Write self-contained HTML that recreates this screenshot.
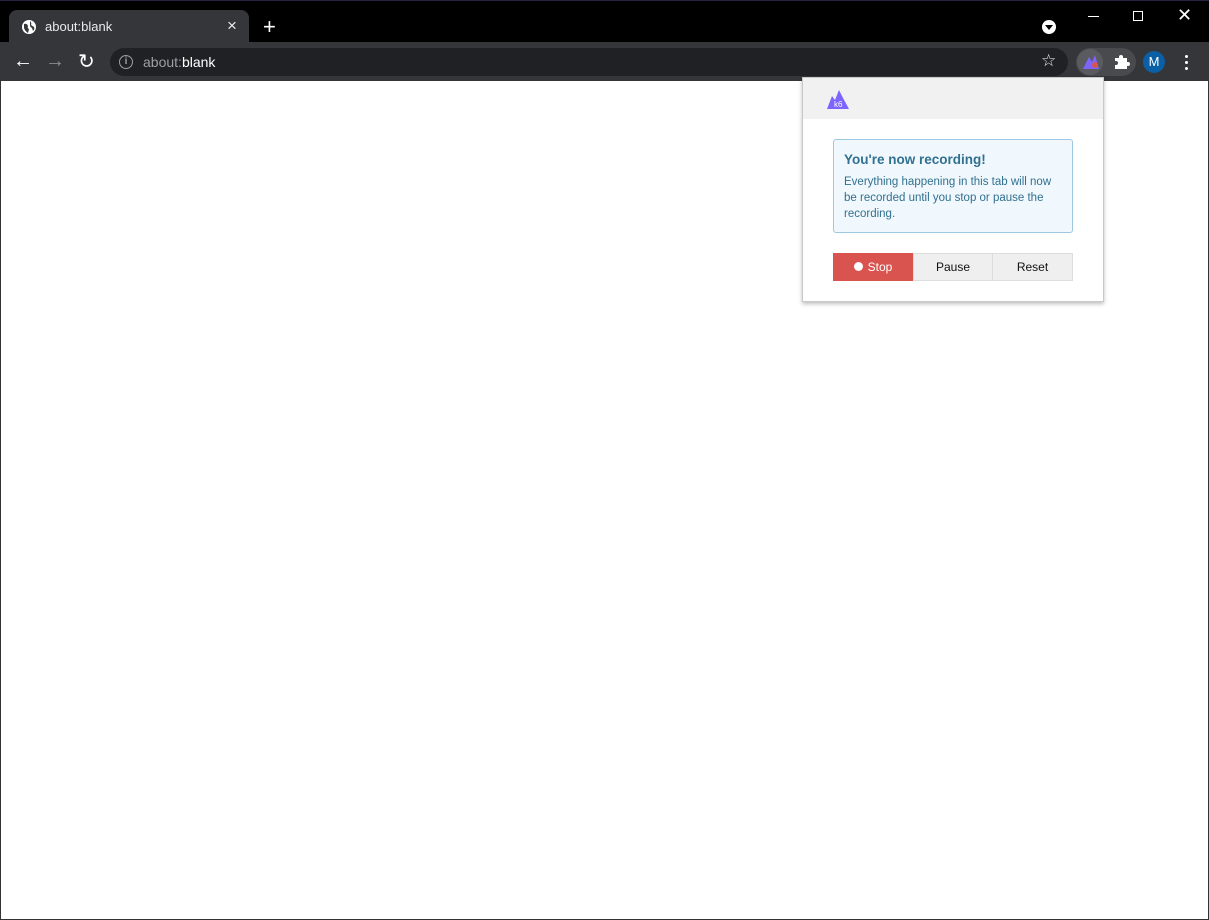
<!DOCTYPE html>
<html><head><style>
*{margin:0;padding:0;box-sizing:border-box}
body{width:1209px;height:920px;overflow:hidden;background:#fff;font-family:"Liberation Sans",sans-serif;position:relative}
.abs{position:absolute}
</style></head><body>
<div class="abs" style="left:0;top:0;width:1209px;height:42px;background:#000;border-top:1px solid #2a2340"></div>
<div class="abs" style="left:9px;top:10px;width:240px;height:34px;background:#35363a;border-radius:8px 8px 0 0"></div>
<svg class="abs" style="left:21px;top:19px" width="16" height="16" viewBox="0 0 16 16"><circle cx="8" cy="8" r="7" fill="#fff"/><path d="M3 5 Q6 4 7 7 Q6 9 8 10 L7 14 Q4 12 3 9Z M9 2 Q11 4 10 6 L13 8 Q14 10 12 12 L11 9 Q9 8 9 6Z" fill="#35363a"/></svg>
<div class="abs" style="left:45px;top:19px;color:#e8eaed;font-size:13px">about:blank</div>
<div class="abs" style="left:227px;top:16px;color:#e8eaed;font-size:17px">×</div>
<div class="abs" style="left:263px;top:14px;color:#fff;font-size:22px">+</div>
<div class="abs" style="left:1042px;top:20px;width:14px;height:14px;border-radius:50%;background:#fff"></div>
<div class="abs" style="left:1045px;top:25px;border-left:4px solid transparent;border-right:4px solid transparent;border-top:5px solid #000"></div>
<div class="abs" style="left:1088px;top:16px;width:11px;height:1px;background:#fff"></div>
<div class="abs" style="left:1133px;top:11px;width:10px;height:10px;border:1px solid #fff"></div>
<div class="abs" style="left:1177px;top:5px;color:#fff;font-size:18px">✕</div>
<div class="abs" style="left:0;top:42px;width:1209px;height:39px;background:#35363a"></div>
<div class="abs" style="left:13px;top:50px;color:#fff;font-size:20px">←</div>
<div class="abs" style="left:45px;top:50px;color:#8a8b8e;font-size:20px">→</div>
<div class="abs" style="left:78px;top:49px;color:#fff;font-size:20px">↻</div>
<div class="abs" style="left:110px;top:48px;width:958px;height:28px;background:#202124;border-radius:14px"></div>
<div class="abs" style="left:119px;top:55px;width:14px;height:14px;border:1.5px solid #9aa0a6;border-radius:50%;color:#9aa0a6;font-size:10px;text-align:center;line-height:11px;font-weight:bold">i</div>
<div class="abs" style="left:143px;top:54px;font-size:14px;color:#9aa0a6">about:<span style="color:#fff">blank</span></div>
<div class="abs" style="left:1041px;top:51px;color:#e8eaed;font-size:17px">☆</div>
<div class="abs" style="left:1076px;top:48px;width:60px;height:28px;background:#494a4e;border-radius:14px"></div>
<div class="abs" style="left:1077px;top:49px;width:26px;height:26px;background:#5a5b5f;border-radius:13px"></div>
<svg class="abs" style="left:1082px;top:53px" width="18" height="18" viewBox="0 0 18 18"><path d="M1 16 L7 4 L10 9 L13 2 L17 16Z" fill="#7d64ff"/><circle cx="13" cy="12" r="3" fill="#d9534f"/></svg>
<svg class="abs" style="left:1113px;top:53px" width="18" height="18" viewBox="0 0 18 18"><path d="M2 5 H6 V4 A2 2 0 0 1 10 4 V5 H14 V9 H15 A2 2 0 0 1 15 13 H14 V16 H2 V12 H3 A2 2 0 0 0 3 8 H2Z" fill="#fff"/></svg>
<div class="abs" style="left:1143px;top:51px;width:22px;height:22px;border-radius:50%;background:#0b5fa5;color:#fff;font-size:13px;text-align:center;line-height:22px">M</div>
<div class="abs" style="left:1185px;top:55px;width:3px;height:3px;border-radius:50%;background:#fff"></div>
<div class="abs" style="left:1185px;top:61px;width:3px;height:3px;border-radius:50%;background:#fff"></div>
<div class="abs" style="left:1185px;top:67px;width:3px;height:3px;border-radius:50%;background:#fff"></div>
<div class="abs" style="left:0;top:81px;width:1px;height:839px;background:#333"></div>
<div class="abs" style="left:1208px;top:81px;width:1px;height:839px;background:#333"></div>
<div class="abs" style="left:0;top:919px;width:1209px;height:1px;background:#333"></div>
<div class="abs" style="left:802px;top:77px;width:302px;height:225px;background:#fff;border:1px solid #c8c8c8;box-shadow:0 2px 4px rgba(0,0,0,.25)">
 <div style="height:41px;background:#f1f1f1"></div>
 <svg class="abs" style="left:23px;top:10px" width="24" height="22" viewBox="0 0 24 22"><path d="M1 21 L6 8 L9 12 L13 2 L17 10 L23 21Z" fill="#7d64ff"/><text x="8" y="19" font-size="8" fill="#fff" font-family="Liberation Sans">k6</text></svg>
 <div class="abs" style="left:30px;top:61px;width:240px;height:94px;background:#f0f8fd;border:1px solid #9ec7e2;border-radius:3px;color:#31708f;padding:12px 10px">
  <div style="font-weight:bold;font-size:13.5px;margin-bottom:7px">You're now recording!</div>
  <div style="font-size:11.5px;line-height:16px">Everything happening in this tab will now be recorded until you stop or pause the recording.</div>
 </div>
 <div class="abs" style="left:30px;top:175px;width:80px;height:28px;background:#d9534f;color:#fff;font-size:12px;line-height:28px;text-align:center"><span style="display:inline-block;width:9px;height:9px;border-radius:50%;background:#fff;margin-right:5px"></span>Stop</div>
 <div class="abs" style="left:110px;top:175px;width:80px;height:28px;background:#efefef;border:1px solid #ddd;font-size:12px;line-height:26px;text-align:center;color:#111">Pause</div>
 <div class="abs" style="left:189px;top:175px;width:81px;height:28px;background:#efefef;border:1px solid #ddd;font-size:12px;line-height:26px;text-align:center;color:#111">Reset</div>
</div>
</body></html>
